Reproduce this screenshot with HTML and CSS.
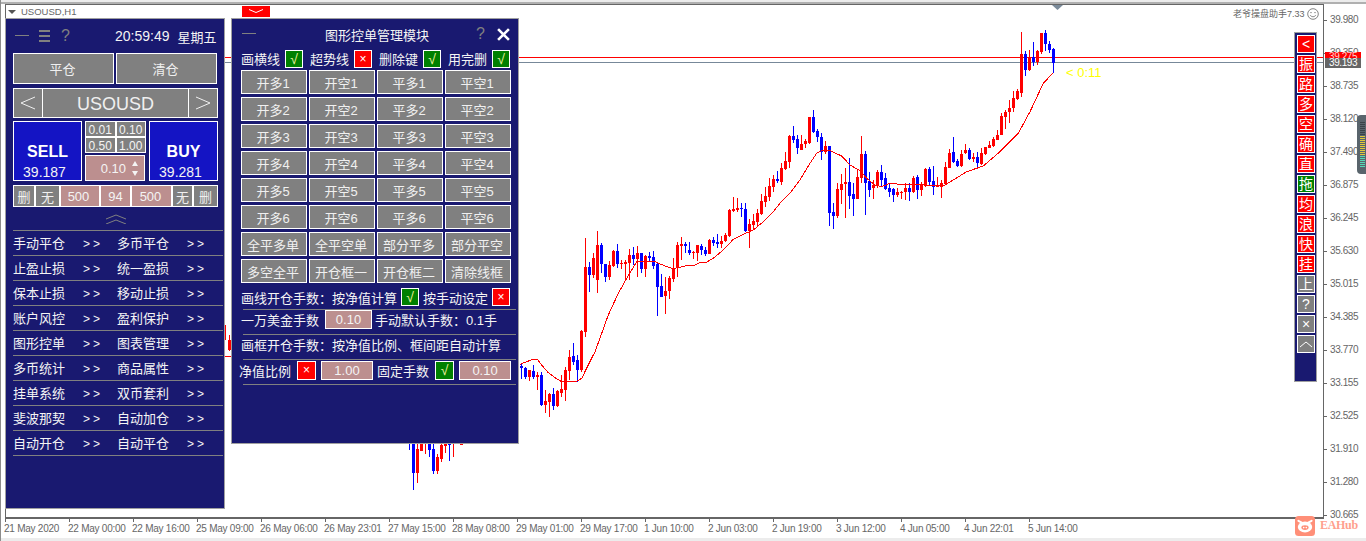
FILE: index.html
```html
<!DOCTYPE html>
<html lang="zh">
<head>
<meta charset="utf-8">
<title>USOUSD,H1</title>
<link rel="stylesheet" href="styles.css">
</head>
<body>
<div class="stage">
  <div class="top-strip"></div>
  <div class="chart-row">
    <div class="chart">
      <div class="titlebar"><span class="title-caret"></span><span>USOUSD,H1</span></div>
    </div>
    <div class="price-axis">
      <div class="price">39.980</div><div class="price">39.350</div><div class="price">38.735</div><div class="price">38.120</div><div class="price">37.490</div><div class="price">36.875</div><div class="price">36.245</div><div class="price">35.630</div><div class="price">35.015</div><div class="price">34.385</div><div class="price">33.770</div><div class="price">33.155</div><div class="price">32.525</div><div class="price">31.910</div><div class="price">31.280</div><div class="price">30.665</div>
    </div>
  </div>
  <div class="time-axis">
    <div class="time">21 May 2020</div><div class="time">22 May 00:00</div><div class="time">22 May 16:00</div><div class="time">25 May 09:00</div><div class="time">26 May 06:00</div><div class="time">26 May 23:01</div><div class="time">27 May 15:00</div><div class="time">28 May 08:00</div><div class="time">29 May 01:00</div><div class="time">29 May 17:00</div><div class="time">1 Jun 10:00</div><div class="time">2 Jun 03:00</div><div class="time">2 Jun 19:00</div><div class="time">3 Jun 12:00</div><div class="time">4 Jun 05:00</div><div class="time">4 Jun 22:01</div><div class="time">5 Jun 14:00</div>
  </div>
  <div class="bottom-strip"></div>

  <svg class="plot" id="plot" viewBox="0 0 1366 541" aria-hidden="true">
    <line class="ask-line" x1="6" x2="1323" y1="57.5" y2="57.5"></line>
    <line class="bid-line" x1="6" x2="1323" y1="62.5" y2="62.5"></line>
    <polygon class="shift-mark" points="1052,5 1063,5 1057.5,10"></polygon>
  </svg>

  <div class="tag tag-ask">39.275</div>
  <div class="tag tag-bid">39.193</div>
  <div class="countdown">&lt; 0:11</div>
  <div class="ea-label">老爷操盘助手7.33<svg class="smiley" viewBox="0 0 12 12"><circle cx="6" cy="6" r="5.3"></circle><circle class="eye" cx="4" cy="4.6" r=".7"></circle><circle class="eye" cx="8" cy="4.6" r=".7"></circle><path d="M3.2 7.2c1.2 2 4.4 2 5.6 0"></path></svg></div>

  <div class="meter"><div class="meter-bars"></div></div>

  <div class="logo">
    <svg class="logo-mark" viewBox="0 0 20 20"><rect width="20" height="20" rx="3.5" fill="#ff8f78"></rect><path d="M3.4 4.8l3.4 1.8M16.6 4.8l-3.4 1.8" stroke="#fff" stroke-width="2" stroke-linecap="round"></path><ellipse cx="10" cy="11" rx="7.2" ry="5.4" fill="#fff"></ellipse><ellipse cx="10" cy="11.6" rx="3.6" ry="2.4" fill="#ff8f78"></ellipse><circle cx="8.7" cy="11.6" r=".8" fill="#fff"></circle><circle cx="11.3" cy="11.6" r=".8" fill="#fff"></circle></svg>
    <span class="logo-text">EAHub</span>
  </div>

  <div class="fold-tab"><svg viewBox="0 0 28 11"><path d="M7 3.5l7 3 7-3"></path></svg></div>

  <!-- left trade panel -->
  <section class="panel panel-trade">
    <div class="trade-head">
      <svg class="icon-dash" viewBox="0 0 14 2"><rect width="14" height="1"></rect></svg>
      <svg class="icon-menu" viewBox="0 0 11 12"><rect width="11" height="2"></rect><rect y="5" width="11" height="2"></rect><rect y="10" width="11" height="2"></rect></svg>
      <span class="icon-help">?</span>
      <span class="clock">20:59:49</span>
      <span class="weekday">星期五</span>
    </div>
    <div class="close-row"><div class="btn">平仓</div><div class="btn">清仓</div></div>
    <div class="symbol-row">
      <div class="btn btn-arrow"><svg viewBox="0 0 16 14"><path d="M15 1L1 7l14 6"></path></svg></div>
      <div class="btn symbol">USOUSD</div>
      <div class="btn btn-arrow"><svg viewBox="0 0 16 14"><path d="M1 1l14 6L1 13"></path></svg></div>
    </div>
    <div class="trade-row">
      <div class="order"><span class="order-name">SELL</span><span class="order-price">39.187</span></div>
      <div class="lots">
        <div class="lot-grid"><div class="lot">0.01</div><div class="lot">0.10</div><div class="lot">0.50</div><div class="lot">1.00</div></div>
        <div class="lot-input"><span>0.10</span><span class="stepper"><i class="step-up"></i><i class="step-down"></i></span></div>
      </div>
      <div class="order"><span class="order-name">BUY</span><span class="order-price">39.281</span></div>
    </div>
    <div class="stop-row">
      <div class="btn stop s22">删</div><div class="btn stop s25">无</div><div class="field stop s40">500</div><div class="field stop s31">94</div><div class="field stop s41">500</div><div class="btn stop s21">无</div><div class="btn stop s25">删</div>
    </div>
    <div class="collapse"><svg viewBox="0 0 20 10"><path d="M0 5L10 1l10 4M0 10L10 6l10 4"></path></svg></div>
    <div class="menu">
      <div class="menu-row"><span>手动平仓</span><span class="more">&gt;&gt;</span><span>多币平仓</span><span class="more">&gt;&gt;</span></div>
      <div class="menu-row"><span>止盈止损</span><span class="more">&gt;&gt;</span><span>统一盈损</span><span class="more">&gt;&gt;</span></div>
      <div class="menu-row"><span>保本止损</span><span class="more">&gt;&gt;</span><span>移动止损</span><span class="more">&gt;&gt;</span></div>
      <div class="menu-row"><span>账户风控</span><span class="more">&gt;&gt;</span><span>盈利保护</span><span class="more">&gt;&gt;</span></div>
      <div class="menu-row"><span>图形控单</span><span class="more">&gt;&gt;</span><span>图表管理</span><span class="more">&gt;&gt;</span></div>
      <div class="menu-row"><span>多币统计</span><span class="more">&gt;&gt;</span><span>商品属性</span><span class="more">&gt;&gt;</span></div>
      <div class="menu-row"><span>挂单系统</span><span class="more">&gt;&gt;</span><span>双币套利</span><span class="more">&gt;&gt;</span></div>
      <div class="menu-row"><span>斐波那契</span><span class="more">&gt;&gt;</span><span>自动加仓</span><span class="more">&gt;&gt;</span></div>
      <div class="menu-row"><span>自动开仓</span><span class="more">&gt;&gt;</span><span>自动平仓</span><span class="more">&gt;&gt;</span></div>
    </div>
  </section>

  <!-- drawing order panel -->
  <section class="panel panel-draw">
    <div class="draw-head">
      <svg class="icon-dash" viewBox="0 0 14 2"><rect width="14" height="1"></rect></svg>
      <span class="draw-title">图形控单管理模块</span>
      <span class="icon-help draw-help">?</span>
      <svg class="icon-close" viewBox="0 0 12 12"><path d="M1 1l10 10M11 1L1 11"></path></svg>
    </div>
    <div class="option-grid">
      <div class="option"><span>画横线</span><span class="box on">√</span></div>
      <div class="option"><span>超势线</span><span class="box off">×</span></div>
      <div class="option"><span>删除键</span><span class="box on">√</span></div>
      <div class="option"><span>用完删</span><span class="box on">√</span></div>
    </div>
    <div class="cmd-grid">
      <div class="btn">开多1</div><div class="btn">开空1</div><div class="btn">平多1</div><div class="btn">平空1</div>
      <div class="btn">开多2</div><div class="btn">开空2</div><div class="btn">平多2</div><div class="btn">平空2</div>
      <div class="btn">开多3</div><div class="btn">开空3</div><div class="btn">平多3</div><div class="btn">平空3</div>
      <div class="btn">开多4</div><div class="btn">开空4</div><div class="btn">平多4</div><div class="btn">平空4</div>
      <div class="btn">开多5</div><div class="btn">开空5</div><div class="btn">平多5</div><div class="btn">平空5</div>
      <div class="btn">开多6</div><div class="btn">开空6</div><div class="btn">平多6</div><div class="btn">平空6</div>
      <div class="btn">全平多单</div><div class="btn">全平空单</div><div class="btn">部分平多</div><div class="btn">部分平空</div>
      <div class="btn">多空全平</div><div class="btn">开仓框一</div><div class="btn">开仓框二</div><div class="btn">清除线框</div>
    </div>
    <div class="set-row set-one">
      <span>画线开仓手数：按净值计算</span><span class="box on">√</span><span>按手动设定</span><span class="box off">×</span>
    </div>
    <div class="rule rule-one"></div>
    <div class="set-row set-two">
      <span>一万美金手数</span><span class="field money">0.10</span><span>手动默认手数：0.1手</span>
    </div>
    <div class="rule rule-two"></div>
    <div class="set-row set-three"><span>画框开仓手数：按净值比例、框间距自动计算</span></div>
    <div class="rule rule-three"></div>
    <div class="set-row set-four">
      <span>净值比例</span><span class="box off wide">×</span><span class="field ratio">1.00</span><span class="fixed-label">固定手数</span><span class="box on wide">√</span><span class="field ratio">0.10</span>
    </div>
    <div class="rule rule-one"></div>
  </section>

  <!-- right tool strip -->
  <nav class="panel panel-tools">
    <div class="tool red">&lt;</div><div class="tool red">振</div><div class="tool red">路</div><div class="tool red">多</div><div class="tool red">空</div><div class="tool red">确</div><div class="tool red">直</div><div class="tool green">拖</div><div class="tool red">均</div><div class="tool red">浪</div><div class="tool red">快</div><div class="tool red">挂</div><div class="tool grey">上</div><div class="tool grey">?</div><div class="tool grey">×</div><div class="tool grey"><svg viewBox="0 0 14 8"><path d="M1 7l6-5 6 5"></path></svg></div>
  </nav>
</div>
<script src="chart.js"></script>
</body>
</html>
```
FILE: styles.css
```css
* { box-sizing: border-box; }
html, body { margin: 0; padding: 0; }
body { font-family: "Liberation Sans", "Noto Sans CJK SC", sans-serif; font-size: 13px; color: #f4f4f4; background: #fff; }

.stage { position: relative; width: 1366px; height: 541px; overflow: hidden; background: #fff; border-left: 1px solid #8c8c8c; }

.top-strip { height: 4px; margin-left: -1px; background: #ececec; border-top: 1px solid #ececec; border-bottom: 2px solid #b0b0b0; }

.chart-row { display: flex; height: 515px; padding-left: 4px; }
.chart { flex: none; width: 1319px; border: 1px solid #666; border-bottom-width: 2px; }
.titlebar { display: flex; align-items: center; gap: 5px; height: 13px; padding-left: 2px; font-size: 9.5px; color: #666; }
.title-caret { width: 0; height: 0; border-left: 4px solid transparent; border-right: 4px solid transparent; border-top: 4px solid #555; }

.price-axis { flex: none; padding-top: 8px; }
.price { position: relative; height: 33px; line-height: 16px; padding-left: 6px; font-size: 10px; letter-spacing: -.4px; color: #666; }
.price::before { content: ""; position: absolute; left: 0; top: 8px; width: 3px; height: 1px; background: #666; }

.time-axis { display: flex; padding-left: 4px; height: 19px; }
.time { position: relative; flex: none; width: 64px; padding-top: 4px; line-height: 12px; font-size: 10px; letter-spacing: -.25px; color: #666; white-space: nowrap; text-indent: -1px; }
.time::before { content: ""; position: absolute; left: 0; top: 0; width: 1px; height: 3px; background: #666; }
.bottom-strip { height: 3px; margin-left: -1px; background: #ececec; }

.plot { position: absolute; left: -1px; top: 0; width: 1366px; height: 541px; }
.ask-line { stroke: #f00; stroke-width: 1; }
.bid-line { stroke: #778899; stroke-width: 1; }
.shift-mark { fill: #7a8a99; }
.candle-red { fill: #f00; }
.candle-blue { fill: #00f; }
.ma-line { fill: none; stroke: #f00; stroke-width: 1; shape-rendering: crispEdges; }

.tag { position: absolute; left: 1324px; width: 36px; padding-left: 4px; font-size: 10px; letter-spacing: -.4px; }
.tag-ask { top: 52px; height: 6px; line-height: 9px; background: #f00; overflow: hidden; color: #ffd0d0; }
.tag-bid { top: 58px; height: 10px; line-height: 10px; background: #666; color: #fff; }
.countdown { position: absolute; left: 1065px; top: 65px; font-size: 13px; line-height: 16px; color: #ff0; }
.ea-label { position: absolute; left: 1232px; top: 7px; display: flex; align-items: center; gap: 2px; font-size: 9px; line-height: 14px; color: #666; }
.smiley { width: 12px; height: 12px; fill: none; stroke: #666; stroke-width: .8; }
.smiley .eye { fill: #666; stroke: none; }

.meter { position: absolute; left: 1356px; top: 115px; width: 10px; height: 59px; padding: 7px 2px 7px 3px; background: #59646c; border-radius: 4px 0 0 4px; }
.meter-bars { height: 45px; background:
  repeating-linear-gradient(to bottom, transparent 0 1px, #59646c 1px 2px),
  linear-gradient(to bottom, #3a4248 0 30%, #e0c83c 30% 73%, #56d8b4 73% 100%); }

.logo { position: absolute; left: 1294px; top: 516px; display: flex; align-items: center; gap: 5px; }
.logo-mark { width: 20px; height: 20px; }
.logo-text { position: relative; top: -1px; font-family: "Liberation Serif", serif; font-weight: 700; font-size: 12px; letter-spacing: -.3px; color: #ffa08e; }

.fold-tab { position: absolute; left: 241px; top: 6px; width: 28px; height: 11px; background: #f00; }
.fold-tab svg { display: block; width: 28px; height: 11px; fill: none; stroke: #fff; stroke-width: 1; }

.panel { position: absolute; background: #191970; border: 1px solid #a0a0a0; }

.btn { display: flex; align-items: center; justify-content: center; padding-right: 2px; background: #808080; border: 1px solid #fff; color: #f0f0f0; white-space: nowrap; }
.field { display: flex; align-items: center; justify-content: center; background: #bc8f8f; border: 1px solid #fff; color: #f4f4f4; }

.icon-dash { width: 14px; height: 2px; fill: #808080; flex: none; }
.icon-menu { width: 11px; height: 12px; fill: #808080; flex: none; }
.icon-help { color: #808080; font-size: 16px; line-height: 16px; }

/* trade panel */
.panel-trade { left: 4px; top: 18px; width: 220px; height: 491px; padding-left: 7px; }
.trade-head { display: flex; align-items: center; height: 34px; }
.trade-head .icon-dash { margin-left: 2px; }
.trade-head .icon-menu { margin-left: 10px; }
.trade-head .icon-help { margin-left: 11px; width: 10px; }
.clock { margin-left: 44px; font-size: 14px; }
.weekday { margin-left: 8px; }
.close-row { display: grid; grid-template-columns: 101px 101px; gap: 2px; height: 31px; }
.symbol-row { display: flex; width: 205px; height: 30px; margin-top: 4px; }
.btn-arrow { flex: none; width: 30px; padding-right: 0; }
.btn-arrow svg { width: 16px; height: 14px; fill: none; stroke: #f0f0f0; stroke-width: 1; }
.symbol-row .symbol { flex: 1; margin: 0 -1px; padding: 2px 0 0; font-size: 18px; }
.trade-row { display: flex; gap: 3px; height: 60px; margin-top: 3px; width: 205px; }
.order { display: flex; flex-direction: column; align-items: center; justify-content: flex-end; flex: none; width: 69px; background: #1414c4; border: 1px solid #fff; }
.order-name { font-size: 16px; font-weight: 700; line-height: 20px; margin-bottom: 2px; color: #fff; }
.order-price { position: relative; left: -3px; font-size: 14px; line-height: 16px; }
.lots { flex: none; width: 61px; display: flex; flex-direction: column; gap: 2px; }
.lot-grid { display: grid; grid-template-columns: 1fr 1fr; grid-template-rows: 16px 16px; }
.lot { display: flex; align-items: center; justify-content: center; padding-top: 1px; background: #808080; border: 1px solid #fff; font-size: 12px; }
.lot-input { display: flex; align-items: center; justify-content: flex-end; gap: 6px; height: 26px; padding-right: 5px; background: #bc8f8f; border: 1px solid #fff; width: 60px; }
.stepper { display: flex; flex-direction: column; gap: 5px; width: 7px; }
.stepper i { display: block; width: 0; height: 0; border-left: 3.5px solid transparent; border-right: 3.5px solid transparent; }
.step-up { border-bottom: 5px solid #f4f4f4; }
.step-down { border-top: 5px solid #f4f4f4; }
.stop-row { display: flex; width: 205px; height: 22px; margin-top: 4px; }
.stop { flex: none; padding-right: 0; }
.s22 { width: 22px; } .s25 { width: 25px; } .s40 { width: 40px; padding-right: 3px; } .s31 { width: 31px; } .s41 { width: 41px; padding-right: 2px; } .s21 { width: 21px; }
.collapse { display: flex; justify-content: center; align-items: center; width: 205px; height: 23px; }
.collapse svg { width: 20px; height: 10px; fill: none; stroke: #808080; stroke-width: 1; }
.menu { width: 210px; border-top: 1px solid #808080; }
.menu-row { display: grid; grid-template-columns: 70px 34px 70px 1fr; align-items: center; height: 25px; padding-top: 2px; border-bottom: 1px solid #808080; line-height: 22px; }
.more { letter-spacing: 3px; font-size: 12px; }

/* drawing panel */
.panel-draw { left: 230px; top: 18px; width: 288px; height: 426px; padding-left: 9px; }
.draw-head { display: flex; align-items: center; height: 30px; }
.draw-head .icon-dash { margin-left: 1px; }
.draw-title { margin-left: 69px; }
.draw-help { margin-left: 47px; width: 10px; }
.icon-close { margin-left: 11px; width: 13px; height: 13px; fill: none; stroke: #fff; stroke-width: 2.4; }
.option-grid { display: grid; grid-template-columns: repeat(4, 62px); column-gap: 7px; height: 18px; }
.option { display: flex; align-items: center; gap: 5px; }
.box { display: flex; align-items: center; justify-content: center; flex: none; width: 18px; height: 18px; border: 1px solid #fff; font-size: 12px; line-height: 1; }
.box.on { background: #008000; color: #eef0a0; font-size: 14px; }
.box.off { background: #f00; color: #fff; }
.box.wide { width: 19px; height: 19px; }
.cmd-grid { display: grid; grid-template-columns: repeat(4, 66px); grid-auto-rows: 24px; column-gap: 2px; row-gap: 3px; margin-top: 3px; }
.set-row { display: flex; align-items: center; }
.rule { height: 1px; width: 273px; margin-left: 2px; background: #808080; }
.set-one { height: 18px; margin-top: 5px; gap: 4px; }
.rule-one { margin-top: 3px; }
.set-two { height: 19px; }
.set-two .money { width: 47px; height: 19px; margin: 0 3px 0 6px; }
.rule-two { margin-top: 5px; }
.set-three { height: 24px; padding-bottom: 5px; }
.set-four { height: 20px; margin-left: -2px; }
.set-four .box { margin-left: 6px; }
.set-four .ratio { width: 52px; height: 19px; margin-left: 5px; }
.fixed-label { margin-left: 4px; }
.set-four + .rule { margin-top: 4px; }

/* tool strip */
.panel-tools { left: 1293px; top: 32px; width: 23px; height: 350px; padding: 2px 0 0 2px; display: flex; flex-direction: column; gap: 2px; }
.tool { display: flex; align-items: center; justify-content: center; width: 18px; height: 18px; flex: none; border: 1px solid #fff; font-size: 14px; line-height: 1; color: #fff; }
.tool.red { background: #f00; }
.tool.green { background: #008000; }
.tool.grey { background: #808080; }
.tool svg { width: 14px; height: 8px; fill: none; stroke: #fff; stroke-width: 1; }
```
FILE: chart.js
```js
// Candles: [colour, high, bodyTop, bodyBottom, low]; x steps 4px.
var zoomA = [
"b490,497,505,537","b500,503,532,537","r510,510,532,543","b495,513,532,537","r515,525,532,570","b517,525,615,618",
"r570,603,615,640","r578,582,605,650","b563,582,617,630","r570,573,618,620","r525,568,578,590","r500,510,570,603",
"r450,472,513,540","b430,468,485,495","b465,480,510,545","r390,393,510,515","r113,201,395,410","b186,201,225,276",
"r160,174,225,233","r93,135,240,278","b130,135,193,220","b192,192,232,245","r183,195,232,240","r150,153,198,200",
"b132,153,192,205","r180,188,192,207","r180,186,191,240","r147,165,190,240","b141,165,177,195","r138,159,177,230",
"b159,159,207,218","r165,168,207,230","b155,168,175,187","b153,171,198,207","b190,191,261,347","b222,258,290,292",
"r230,273,288,342","r227,233,273,297","r174,204,238,245","r127,135,205,231","r111,132,137,180","b127,132,138,158",
"b126,150,160,165","r153,155,158,178","r135,135,158,183","b131,138,150,165","b141,150,162,168","r117,120,162,162",
"b111,120,128,138","b102,126,132,143","r108,123,132,143","r100,105,123,125","r28,30,107,110"];
var realB = [
"r197,209,211,212","r198,208,210,212","b203,208,209,217","b203,209,231,232","r219,224,231,248","r214,221,225,230",
"r209,213,222,227","r194,201,214,215","r187,196,202,207","r178,186,197,201","r175,179,187,192","b171,179,181,183"];
var zoomC = [
"r430,445,485,495","r397,423,448,450","r345,347,427,445","b318,348,360,368","b345,357,385,402","r345,372,390,390",
"r358,363,372,385","r290,290,370,372","b270,291,337,340","b327,333,350,365","b340,350,397,420","r363,378,397,403",
"b378,378,578,618","b550,576,588,627","r488,507,588,593","r462,492,510,553","r445,487,492,595","b413,487,527,567",
"b490,522,537,587","r450,471,537,537","r348,402,473,490","b393,402,488,585","b455,483,510,530","r480,496,503,537",
"r450,456,497,505","b435,456,480,497","b460,475,507,510","b490,505,515,530","b503,507,525,545","r505,515,525,530",
"r513,516,519,537","r490,505,515,540","b490,505,515,542","r468,474,515,520","b466,471,510,538","r485,496,510,527",
"r445,447,497,500","b440,447,487,497","b438,483,500,525","r470,495,500,502","r480,489,500,533","r425,441,492,495",
"r388,399,444,445","b351,396,426,430","b418,423,437,440","r390,402,438,440","r372,390,400,403","b384,390,417,420",
"r400,411,416,425","b397,411,430,442","r385,400,432,435","r380,381,403,405","r363,375,385,385","r352,356,378,380",
"r330,345,360,360","r278,288,345,345","r270,276,291,327","r240,263,277,310","r212,234,264,275","r207,214,237,240",
"r36,102,219,230","b93,102,150,167","r90,112,150,152","b66,112,127,137","r90,93,127,135","r40,40,95,103",
"b30,40,72,93","b63,72,90,100","b85,87,128,158"];
// Partly hidden candles: [x, colour, high, bodyTop, bodyBottom, low]
var lower = [
[409,"b",440,440,440,450],[413,"b",440,440,473,490],[417,"r",440,449,473,483],[421,"r",440,440,451,451],
[425,"r",440,440,440,454],[429,"b",440,440,450,457],[433,"b",440,449,471,474],[437,"r",454,457,471,474],
[441,"r",440,445,459,462],[445,"r",440,444,446,453],[449,"b",440,444,445,461],[453,"r",440,440,440,457],
[461,"r",440,444,445,445],[225,"r",325,325,325,340],[229,"r",335,340,350,351]];

var maA = [[0,493],[20,485],[40,478],[52,478],[65,495],[85,518],[105,533],[125,545],[150,545],[172,543],[185,535],[205,495],[225,455],[245,400],[265,345],[295,280],[320,235],[350,185],[400,183],[440,200],[460,206],[500,197],[520,197],[540,188],[560,186],[580,175],[610,150],[640,118],[665,105],[700,90],[730,65],[760,35]];
var maC = [[0,550],[30,520],[60,480],[90,430],[110,400],[130,390],[150,392],[185,408],[210,435],[240,452],[260,475],[285,495],[305,500],[330,490],[360,493],[400,493],[440,495],[490,498],[520,480],[560,455],[610,438],[660,395],[715,340],[750,275],[790,190],[820,158]];

var svg = document.getElementById("plot");
var NS = "http://www.w3.org/2000/svg";
function add(cls, x, y, w, h) {
  var r = document.createElementNS(NS, "rect");
  r.setAttribute("class", cls);
  r.setAttribute("x", x); r.setAttribute("y", y);
  r.setAttribute("width", w); r.setAttribute("height", Math.max(h, 1));
  r.setAttribute("shape-rendering", "crispEdges");
  svg.appendChild(r);
}
function candle(x, c, hi, top, bot, lo) {
  var cls = c === "r" ? "candle-red" : "candle-blue";
  add(cls, x, hi, 1, lo - hi);
  if (bot > top) add(cls, x - 1, top, 3, bot - top);
}
function series(list, startX, conv) {
  list.forEach(function (s, i) {
    var v = s.slice(1).split(",").map(function (n) { return conv(+n); });
    candle(startX + 4 * i, s[0], v[0], v[1], v[2], v[3]);
  });
}
var same = function (n) { return n; };
series(zoomA, 521, function (z) { return Math.round(200 + z / 3); });
series(realB, 733, same);
series(zoomC, 781, function (z) { return Math.round(20 + z / 3); });
lower.forEach(function (c) { candle(c[0], c[1], c[2], c[3], c[4], c[5]); });

var line = maA.map(function (p) { return (520 + p[0] / 3).toFixed(1) + " " + (200 + p[1] / 3).toFixed(1); })
  .concat(maC.map(function (p) { return (780 + p[0] / 3).toFixed(1) + " " + (20 + p[1] / 3).toFixed(1); }));
var ma = document.createElementNS(NS, "path");
ma.setAttribute("class", "ma-line");
ma.setAttribute("d", "M225 356H231 M" + line.join("L"));
svg.appendChild(ma);
```
